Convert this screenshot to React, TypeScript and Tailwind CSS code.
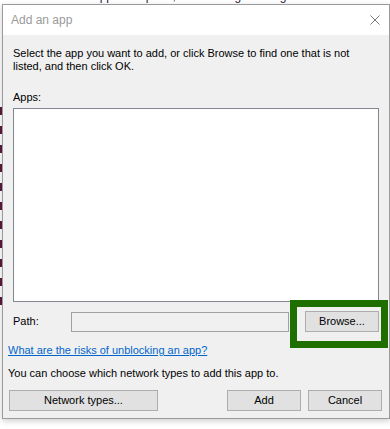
export default function App() {
  const marks = Array(11).fill(null);

  return (
    <div className="relative h-[429px] w-[390px] overflow-hidden bg-white font-['Liberation_Sans',Arial,sans-serif] text-[11px] leading-[13px] text-black">
      {/* page behind the dialog */}
      <div className="-mt-[10px] ml-[93px] whitespace-nowrap text-[12px] leading-[13px] text-[#1a1a3a]">
        apps and ports, click Change settings.
      </div>
      <div className="mt-[104px] flex flex-col gap-[11px]">
        {marks.map((_, i) => (
          <div key={i} className="h-[8px] w-[2px] bg-[#5b1a3a]" />
        ))}
      </div>

      {/* dialog */}
      <div className="absolute left-[2px] top-[4px] flex h-[415px] w-[388px] flex-col border border-[#9a9a9a] bg-[#f0f0f0] shadow-[0_2px_6px_rgba(0,0,0,0.2)]">
        <div className="flex h-[30px] items-center justify-between bg-white pl-[8px] pr-[9px]">
          <span className="text-[12px] text-[#9a9a9a]">Add an app</span>
          <svg width="10" height="10" viewBox="0 0 10 10">
            <path d="M0.5 0.5 L9.5 9.5 M9.5 0.5 L0.5 9.5" stroke="#7a7a7a" strokeWidth="1" fill="none" />
          </svg>
        </div>

        <div className="flex flex-1 flex-col px-[10px] pt-[12px]">
          <p className="whitespace-nowrap">
            Select the app you want to add, or click Browse to find one that is not
            <br />
            listed, and then click OK.
          </p>
          <div className="mt-[18px]">Apps:</div>
          <div className="mt-[4px] h-[194px] border border-[#828790] bg-white" />

          <div className="mt-[9px] flex h-[21px] items-center">
            <span className="w-[58px]">Path:</span>
            <div className="h-[20px] w-[218px] border border-[#a0a0a0] bg-[#f0f0f0]" />
            <button className="ml-auto h-[21px] w-[74px] border border-[#adadad] bg-[#e1e1e1]">
              Browse...
            </button>
          </div>

          <a className="-ml-[5px] mt-[12px] w-fit text-[#0066cc] underline">
            What are the risks of unblocking an app?
          </a>
          <div className="-ml-[5px] mt-[10px]">You can choose which network types to add this app to.</div>

          <div className="-ml-[4px] -mr-[3px] mt-[10px] flex h-[21px] items-center">
            <button className="h-[21px] w-[149px] border border-[#adadad] bg-[#e1e1e1]">Network types...</button>
            <button className="ml-auto h-[21px] w-[74px] border border-[#adadad] bg-[#e1e1e1]">Add</button>
            <button className="ml-[7px] h-[21px] w-[74px] border border-[#adadad] bg-[#e1e1e1]">Cancel</button>
          </div>
        </div>
      </div>

      {/* highlight around Browse */}
      <div className="absolute left-[290px] top-[300px] h-[48px] w-[98px] border-[7px] border-[#1f6e00]" />
    </div>
  );
}
